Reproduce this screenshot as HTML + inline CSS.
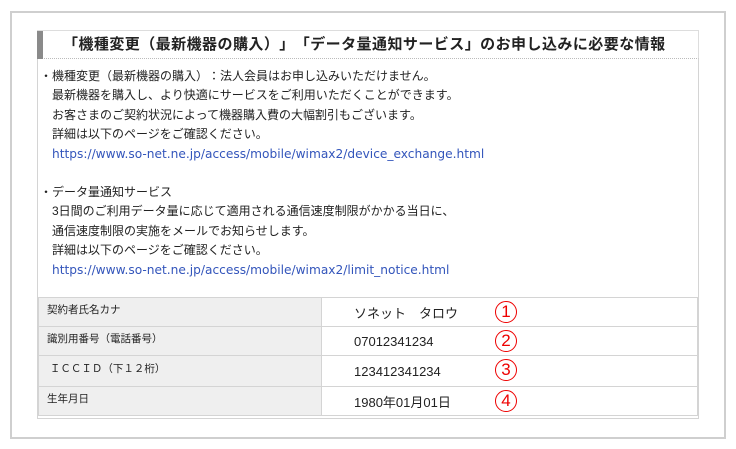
<!DOCTYPE html>
<html><head><meta charset="utf-8">
<style>
*{margin:0;padding:0;box-sizing:border-box}
body{width:736px;height:449px;background:#fff;position:relative;font-family:"Liberation Sans","Noto Sans CJK JP",sans-serif;color:#222;overflow:hidden;text-spacing-trim:space-all}
.frame{position:absolute;left:10px;top:11px;width:716px;height:428px;border:2px solid #cfcfcf}
.panel{position:absolute;left:37px;top:30px;width:662px;height:389px;border:1px solid #d4d4d4;border-top:none}
.title{position:absolute;left:37px;top:30px;width:662px;height:29px;border-top:1px solid #ddd;border-right:1px solid #ddd;border-bottom:1px dotted #bbb;font-weight:bold;font-size:15px;line-height:27px;padding-left:26px;letter-spacing:0.45px;white-space:nowrap}
.title:before{content:"";position:absolute;left:0;top:0;width:6px;height:28px;background:#8a8a8a}
.txt{position:absolute;left:40px;font-size:12px;line-height:19.4px;white-space:nowrap}
.txt p{height:19.4px}
.in{padding-left:12px}
.url{color:#3355bb;font-family:"DejaVu Sans",sans-serif;font-size:12.2px}
table{position:absolute;left:38px;top:297px;width:660px;border-collapse:collapse;font-size:10.5px}
td{border:1px solid #d4d4d4;height:29px}
td.l{width:283px;background:#efefef;padding-left:8px;padding-bottom:6px}
td.v{font-size:13px;padding-left:32px;position:relative}
.c{position:absolute;left:173px;top:3px;width:22px;height:22px;border:1.6px solid #e00;border-radius:50%;color:#e00;font-size:17px;line-height:19px;text-align:center}
</style></head><body>
<div class="frame"></div>
<div class="panel"></div>
<div class="title">「機種変更（最新機器の購入）」「データ量通知サービス」のお申し込みに必要な情報</div>
<div class="txt" style="top:67px">
<p>・機種変更（最新機器の購入）：法人会員はお申し込みいただけません。</p>
<p class="in">最新機器を購入し、より快適にサービスをご利用いただくことができます。</p>
<p class="in">お客さまのご契約状況によって機器購入費の大幅割引もございます。</p>
<p class="in">詳細は以下のページをご確認ください。</p>
<p class="in url">https://www.so-net.ne.jp/access/mobile/wimax2/device_exchange.html</p>
</div>
<div class="txt" style="top:183px">
<p>・データ量通知サービス</p>
<p class="in">3日間のご利用データ量に応じて適用される通信速度制限がかかる当日に、</p>
<p class="in">通信速度制限の実施をメールでお知らせします。</p>
<p class="in">詳細は以下のページをご確認ください。</p>
<p class="in url">https://www.so-net.ne.jp/access/mobile/wimax2/limit_notice.html</p>
</div>
<table>
<tr><td class="l">契約者氏名カナ</td><td class="v">ソネット　タロウ<span class="c">1</span></td></tr>
<tr><td class="l">識別用番号（電話番号）</td><td class="v">07012341234<span class="c">2</span></td></tr>
<tr><td class="l" style="height:31px">&nbsp;ＩＣＣＩＤ（下１２桁）</td><td class="v">123412341234<span class="c">3</span></td></tr>
<tr><td class="l">生年月日</td><td class="v">1980年01月01日<span class="c">4</span></td></tr>
</table>
</body></html>
